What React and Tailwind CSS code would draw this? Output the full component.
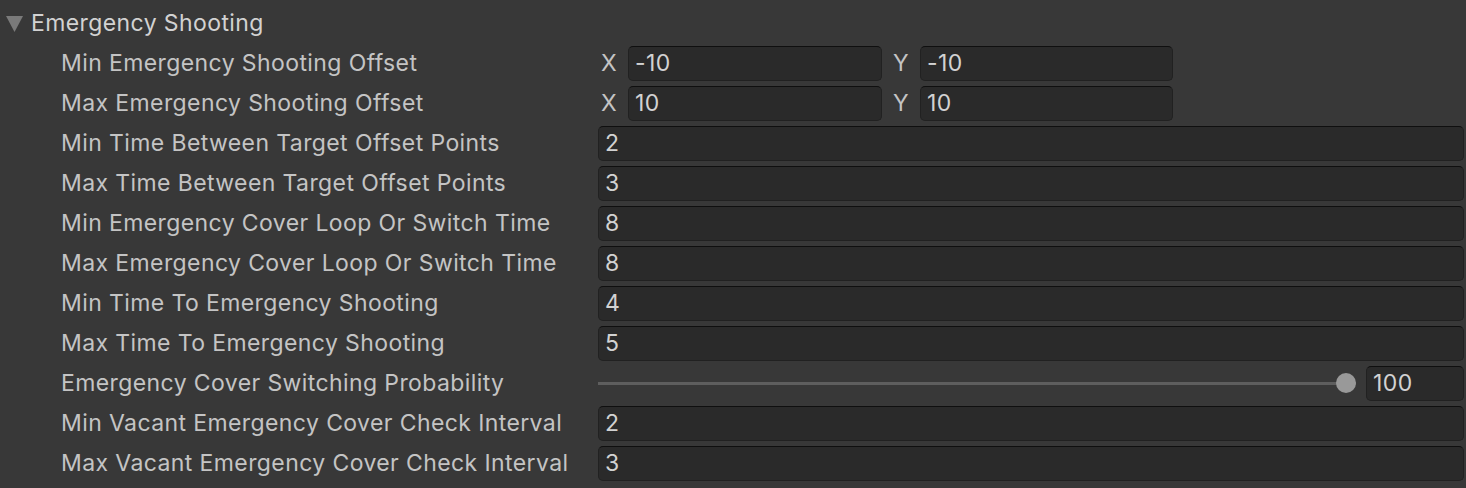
// App.jsx
import React from "react";

const rows = [
  { label: "Min Emergency Shooting Offset", type: "vec2", x: "-10", y: "-10" },
  { label: "Max Emergency Shooting Offset", type: "vec2", x: "10", y: "10" },
  { label: "Min Time Between Target Offset Points", value: "2" },
  { label: "Max Time Between Target Offset Points", value: "3" },
  { label: "Min Emergency Cover Loop Or Switch Time", value: "8" },
  { label: "Max Emergency Cover Loop Or Switch Time", value: "8" },
  { label: "Min Time To Emergency Shooting", value: "4" },
  { label: "Max Time To Emergency Shooting", value: "5" },
  { label: "Emergency Cover Switching Probability", type: "slider", value: "100" },
  { label: "Min Vacant Emergency Cover Check Interval", value: "2" },
  { label: "Max Vacant Emergency Cover Check Interval", value: "3" },
];

const Field = ({ value, className = "" }) => (
  <div
    className={`h-[35px] flex items-center pl-[6px] pt-[1px] bg-[#2a2a2a] border border-[#212121] border-t-[#0f0f0f] rounded-[5px] text-[#d2d2d2] ${className}`}
  >
    {value}
  </div>
);

const Row = ({ row }) => (
  <div className="h-[40px] flex items-center">
    <div className="w-[598px] pl-[61px] pt-[1px] shrink-0 whitespace-nowrap">{row.label}</div>

    {row.type === "vec2" && (
      <div className="flex items-center">
        <span className="w-[30px] pl-[3px] pt-[1px]">X</span>
        <Field value={row.x} className="w-[254px]" />
        <span className="w-[38px] pl-[11px] pt-[1px]">Y</span>
        <Field value={row.y} className="w-[253px]" />
      </div>
    )}

    {row.type === "slider" && (
      <div className="flex items-center flex-1 pr-[2px]">
        <div className="relative flex-1 h-[20px] flex items-center mr-[10px]">
          <div className="w-full h-[3px] bg-[#5e5e5e]"></div>
          <div className="absolute right-0 top-0 w-[20px] h-[20px] rounded-full bg-[#999999]"></div>
        </div>
        <Field value={row.value} className="w-[98px]" />
      </div>
    )}

    {!row.type && (
      <div className="flex-1 pr-[2px]">
        <Field value={row.value} />
      </div>
    )}
  </div>
);

export default function App() {
  return (
    <div
      className="w-[1466px] h-[488px] bg-[#383838] text-[#c4c4c4] text-[23px] tracking-[0.4px] pt-[3px] overflow-hidden"
      style={{ fontFamily: "Inter, 'Noto Sans', sans-serif" }}
    >
      {/* Foldout header */}
      <div className="h-[40px] flex items-center">
        <svg width="17" height="17" viewBox="0 0 17 17" className="ml-[6px] mr-[8px]">
          <polygon points="0,1 17,1 8.5,17" fill="#7a7a7a" />
        </svg>
        <span className="text-[#d2d2d2] pt-[1px]">Emergency Shooting</span>
      </div>

      {rows.map((row) => (
        <Row key={row.label} row={row} />
      ))}
    </div>
  );
}
